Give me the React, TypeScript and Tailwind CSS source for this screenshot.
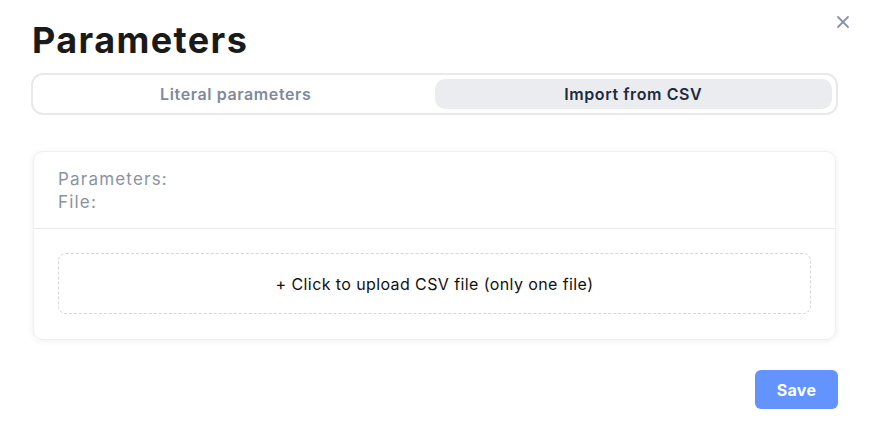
import React from "react";

export default function App() {
  return (
    <div className="w-[871px] h-[430px] bg-white relative" style={{ fontFamily: "Inter, 'Noto Sans', sans-serif" }}>
      <button className="absolute right-[20px] top-[14px] text-[#8a93a3]">
        <svg width="16" height="16" viewBox="0 0 16 16" fill="none" stroke="currentColor" strokeWidth="1.8" strokeLinecap="round">
          <path d="M3 3L13 13M13 3L3 13" />
        </svg>
      </button>
      <div className="px-[31px] pt-[18px]">
        <h1 className="text-[36px] leading-[44px] font-bold text-[#1a1a1a] pl-[1px] tracking-[1.4px]">Parameters</h1>
        <div className="mt-[11px] h-[42px] border-2 border-[#e8e9ee] rounded-[12px] p-[4px] flex w-[807px]">
          <div className="flex-1 flex items-center justify-center text-[16px] font-semibold text-[#7f8a9b] tracking-[0.6px]">Literal parameters</div>
          <div className="flex-1 flex items-center justify-center text-[16px] font-semibold text-[#1f2a3c] bg-[#ebecf0] rounded-[10px] tracking-[0.6px]">Import from CSV</div>
        </div>
        <div className="mt-[36px] ml-[2px] w-[803px] rounded-[10px] bg-white border border-[#eef0f4] shadow-[0_1px_6px_rgba(30,50,100,0.08)]">
          <div className="px-[24px] pt-[16px] pb-[14px] text-[17px] leading-[23px] text-[#8a93a3] border-b border-[#e8e9ee] tracking-[1.2px]">
            <div>Parameters:</div>
            <div>File:</div>
          </div>
          <div className="px-[24px] pt-[24px] pb-[25px]">
            <div className="h-[61px] border border-dashed border-[#d6d6da] rounded-[8px] flex items-center justify-center text-[16px] text-[#111] tracking-[0.4px]">
              + Click to upload CSV file (only one file)
            </div>
          </div>
        </div>
        <div className="flex justify-end mt-[30px] w-[807px]">
          <button className="w-[83px] h-[39px] rounded-[6px] bg-[#6393fe] text-white text-[16px] font-bold tracking-[0.3px]">Save</button>
        </div>
      </div>
    </div>
  );
}
